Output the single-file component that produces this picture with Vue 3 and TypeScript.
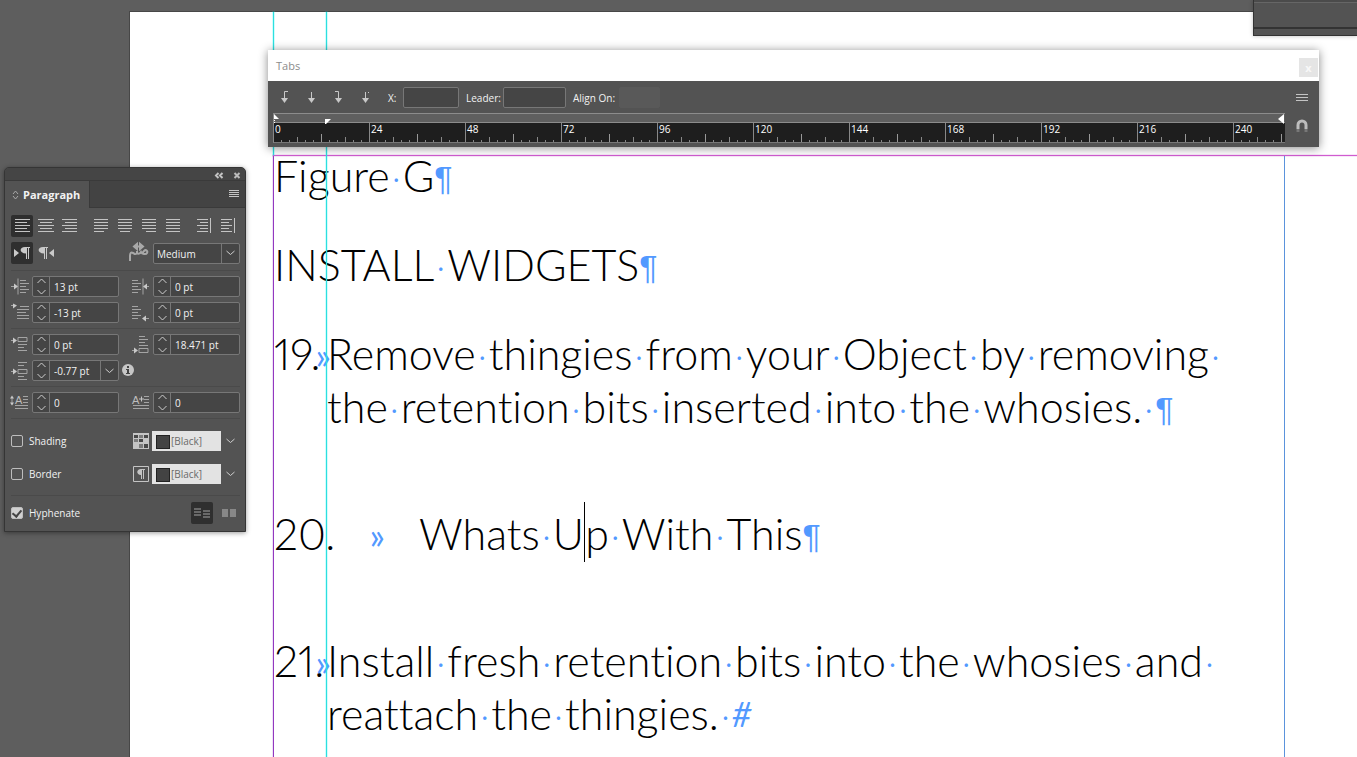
<script setup lang="ts">
import { ref } from 'vue'

interface Field { id: string; label: string; icon: string; value: string; menu?: boolean }
interface Line { words: string[]; end?: string }
interface Para { num?: string; wide?: boolean; lines: Line[] }

const aligns: { label: string; group: number; side?: boolean; rows: [number, number][] }[] = [
  { label: 'Align left', group: 0, rows: [[2, 17], [2, 14], [2, 17], [2, 14], [2, 17]] },
  { label: 'Align center', group: 0, rows: [[1, 17], [3, 15], [1, 17], [3, 15], [1, 17]] },
  { label: 'Align right', group: 0, rows: [[1, 16], [4, 16], [1, 16], [4, 16], [1, 16]] },
  { label: 'Justify last left', group: 1, rows: [[2, 16], [2, 16], [2, 16], [2, 16], [2, 12]] },
  { label: 'Justify last centered', group: 0, rows: [[2, 16], [2, 16], [2, 16], [2, 16], [4, 14]] },
  { label: 'Justify last right', group: 0, rows: [[2, 16], [2, 16], [2, 16], [2, 16], [6, 16]] },
  { label: 'Justify all', group: 0, rows: [[2, 16], [2, 16], [2, 16], [2, 16], [2, 16]] },
  { label: 'Align towards spine', group: 1, side: true, rows: [[2, 13], [5, 13], [2, 13], [5, 13], [2, 13]] },
  { label: 'Align away from spine', group: 0, side: true, rows: [[2, 13], [2, 10], [2, 13], [2, 10], [2, 13]] },
]

const indentIcons: Record<string, string> = {
  left: 'M0 9h5M7 1v16M9 3h6M9 6h9M9 9h6M9 12h9M9 15h6',
  right: 'M0 3h6M0 6h9M0 9h6M0 12h9M0 15h6M11 1v16M13 9h4',
  first: 'M0 2h4M9 3h9M6 6h12M6 9h9M6 12h12M6 15h12',
  last: 'M0 3h6M0 6h9M0 9h6M0 12h9M0 15h6M12 15h5',
  before: 'M0 5h4M7 2h9v4h-9zM7 9h9M7 12h6M7 15h9',
  after: 'M7 1h6M7 4h9M7 7h6M7 10h9M7 13h9v4h-9zM0 15h4',
  between: 'M7 1h9M7 4h6M7 8h9v4h-9zM7 15h6M7 18h9M0 10h4',
  dropLines: 'M1 4v7M12 3h5M12 6h5M12 9h5M4 12h13M4 15h13',
  dropChars: 'M12 3h5M12 6h5M12 9h5M1 12h16M1 15h16',
}
const arrowHeads: Record<string, string> = {
  left: 'M3 6l4 3-4 3z',
  right: 'M15 6l-4 3 4 3z',
  first: 'M2 0l4 2-4 3z',
  last: 'M14 12l-4 3 4 3z',
  before: 'M2 2l4 3-4 3z',
  after: 'M2 12l4 3-4 3z',
  between: 'M2 7l4 3-4 3z',
  dropLines: 'M-1 5l2-3 2 3zM-1 9l2 3 2-3z',
  dropChars: '',
}

const groups = ref<Field[][]>([
  [
    { id: 'li', label: 'Left indent', icon: 'left', value: '13 pt' },
    { id: 'ri', label: 'Right indent', icon: 'right', value: '0 pt' },
    { id: 'fi', label: 'First line left indent', icon: 'first', value: '-13 pt' },
    { id: 'la', label: 'Last line right indent', icon: 'last', value: '0 pt' },
  ],
  [
    { id: 'sb', label: 'Space before', icon: 'before', value: '0 pt' },
    { id: 'sa', label: 'Space after', icon: 'after', value: '18.471 pt' },
    { id: 'sp', label: 'Space between paragraphs', icon: 'between', value: '-0.77 pt', menu: true },
  ],
  [
    { id: 'dl', label: 'Drop cap lines', icon: 'dropLines', value: '0' },
    { id: 'dc', label: 'Drop cap characters', icon: 'dropChars', value: '0' },
  ],
])

const shading = ref(false)
const border = ref(false)
const hyphenate = ref(true)
const tabX = ref('')
const leader = ref('')
const marks = Array.from({ length: 11 }, (_, i) => i * 24)
const tabIcons = [
  { label: 'Left-justified tab', d: 'M6.500 11V2.500H10' },
  { label: 'Center-justified tab', d: 'M6.500 11V3' },
  { label: 'Right-justified tab', d: 'M3 2.500h3.500V11' },
  { label: 'Align to decimal tab', d: 'M6.500 11V3M9 3.500h1' },
]

const paras: Para[] = [
  { lines: [{ words: ['Figure', 'G'], end: '¶' }] },
  { lines: [{ words: ['INSTALL', 'WIDGETS'], end: '¶' }] },
  {
    num: '19.',
    lines: [
      { words: ['Remove', 'thingies', 'from', 'your', 'Object', 'by', 'removing', ''] },
      { words: ['the', 'retention', 'bits', 'inserted', 'into', 'the', 'whosies.', ''], end: '¶' },
    ],
  },
  { num: '20.', wide: true, lines: [{ words: ['Whats', 'U|p', 'With', 'This'], end: '¶' }] },
  {
    num: '21.',
    lines: [
      { words: ['Install', 'fresh', 'retention', 'bits', 'into', 'the', 'whosies', 'and', ''] },
      { words: ['reattach', 'the', 'thingies.', ''], end: '#' },
    ],
  },
]
</script>

<template>
  <main class="desk">
    <section class="page" aria-label="Document page">
      <i class="guide first"></i>
      <i class="guide second"></i>
      <i class="frame-top"></i>
      <div class="frame">
        <div v-for="(p, i) in paras" :key="i" class="para" :class="{ list: p.num, wide: p.wide }">
          <span v-if="p.num" class="num">{{ p.num }}<span class="tabmark">»</span></span>
          <div class="lines">
            <p v-for="(l, j) in p.lines" :key="j" class="line">
              <template v-for="(w, k) in l.words" :key="k">
                <span v-if="k" class="space">·</span>
                <template v-if="w.includes('|')">{{ w.split('|')[0] }}<i class="caret"></i>{{ w.split('|')[1] }}</template>
                <template v-else>{{ w }}</template>
              </template>
              <span v-if="l.end" class="end" :class="{ hash: l.end === '#' }">{{ l.end }}</span>
            </p>
          </div>
        </div>
      </div>
    </section>

    <div class="dock"></div>

    <section class="tabs" aria-label="Tabs">
      <header class="tabs-title">
        <span>Tabs</span>
        <button class="close" aria-label="Close">x</button>
      </header>
      <div class="tabs-body">
        <div class="tabs-main">
          <div class="tabs-tools">
            <button v-for="t in tabIcons" :key="t.label" class="tabbtn" :aria-label="t.label">
              <svg width="14" height="16" viewBox="0 0 14 16"><path :d="t.d" /><path class="fill" d="M3 9h7l-3.500 5z" /></svg>
            </button>
            <label for="tx" class="lx">X:</label><input id="tx" v-model="tabX" class="box bx" />
            <label for="tl" class="ll">Leader:</label><input id="tl" v-model="leader" class="box bl" />
            <label for="ta" class="la">Align On:</label><input id="ta" class="box off" disabled />
          </div>
          <div class="ruler">
            <div class="strip">
              <svg class="mk start" width="6" height="10" viewBox="0 0 6 10"><path d="M0 0l5 5H0z" /><path d="M0 6h1v1H0zM0 8h1v1H0z" /></svg>
              <svg class="mk indent" width="6" height="5" viewBox="0 0 6 5"><path d="M0 0h6L1 5H0z" /></svg>
              <svg class="mk stop" width="6" height="10" viewBox="0 0 6 10"><path d="M6 0v10L0 5z" /></svg>
            </div>
            <div class="scale"><span v-for="m in marks" :key="m">{{ m }}</span></div>
          </div>
        </div>
        <div class="tabs-side">
          <button aria-label="Panel menu"><svg width="14" height="10" viewBox="0 0 14 10"><path class="ln" d="M1 1.500h12M1 4.500h12M1 7.500h12" /></svg></button>
          <button aria-label="Position panel above text frame">
            <svg width="14" height="14" viewBox="0 0 14 14"><path class="mag" d="M3 10V6a4 4 0 0 1 8 0v4" /><path class="tip" d="M3 10v3M11 10v3" /></svg>
          </button>
        </div>
      </div>
    </section>

    <section class="panel" aria-label="Paragraph">
      <div class="grip">
        <button aria-label="Collapse"><svg width="8" height="7" viewBox="0 0 8 7"><path class="thick" d="M3.500 1L1 3.500 3.500 6M7.500 1L5 3.500 7.500 6" /></svg></button>
        <button aria-label="Close panel"><svg width="8" height="7" viewBox="0 0 8 7"><path class="cross" d="M1.500 1l5 5M6.500 1l-5 5" /></svg></button>
      </div>
      <div class="tabrow">
        <h2><svg width="7" height="10" viewBox="0 0 7 10"><path class="thin" d="M1 4l2.500-3L6 4M1 6l2.500 3L6 6" /></svg>Paragraph</h2>
        <button class="menu" aria-label="Paragraph menu"><svg width="10" height="8" viewBox="0 0 10 8"><path class="ln" d="M0 .5h10M0 2.500h10M0 4.500h10M0 6.500h10" /></svg></button>
      </div>
      <div class="body">
        <div class="row aligns">
          <button v-for="(a, i) in aligns" :key="a.label" class="ib" :class="{ on: i === 0, gap: a.group }" :aria-label="a.label">
            <svg width="18" height="18" viewBox="0 0 18 18">
              <path v-for="(r, k) in a.rows" :key="k" class="ln" :d="`M${r[0]} ${k * 3 + 2}.5H${r[1]}`" />
              <path v-if="a.side" class="ln" d="M15.500 1v15" />
            </svg>
          </button>
        </div>
        <div class="row dir">
          <button class="ib on" aria-label="Left to right"><svg width="18" height="18" viewBox="0 0 18 18"><path class="fl" d="M1 5l5 4-5 4zM12 3h5v1h-1v11h-1V4h-1v11h-1V9.500C6 9.500 6 3 12 3z" /></svg></button>
          <button class="ib" aria-label="Right to left"><svg width="18" height="18" viewBox="0 0 18 18"><path class="fl" d="M17 5l-5 4 5 4zM6 3h5v1h-1v11H9V4H8v11H7V9.500C0 9.500 0 3 6 3z" /></svg></button>
          <svg class="kash" width="19" height="18" viewBox="0 0 19 18"><path d="M1 17v-5c0-3 1-4 3-3s2 2 4 0V7M8 9c1 1 3 1 4-1 1 2 5 3 6 1s-1-4-3-2-1 2 0 2" /><path d="M7 2.500h5" /><path class="fl" d="M8 0v5L5 2.500zM11 0v5l3-2.500z" /></svg>
          <div class="pick"><select aria-label="Kashida width"><option>Medium</option></select><svg width="9" height="6" viewBox="0 0 9 6"><path d="M.5 1l4 3.500 4-3.500" /></svg></div>
        </div>
        <div v-for="(g, gi) in groups" :key="gi" class="fields">
          <div v-for="f in g" :key="f.id" class="field">
            <label :for="f.id" :aria-label="f.label">
              <svg width="18" height="19" viewBox="0 -0.500 18 19">
                <path class="ln two" :d="indentIcons[f.icon]" /><path class="fl" :d="arrowHeads[f.icon]" />
                <text v-if="f.icon.startsWith('drop')" :x="f.icon === 'dropLines' ? 4 : 0" y="10">A</text>
                <path v-if="f.icon === 'dropChars'" class="ln" d="M9.500 3v5M7 5.500h5" />
              </svg>
            </label>
            <div class="num-box">
              <button class="step" :aria-label="'Step ' + f.label"><svg width="9" height="17" viewBox="0 0 9 17"><path d="M.5 5l4-4 4 4M.5 12l4 4 4-4" /></svg></button>
              <input :id="f.id" v-model="f.value" />
              <button v-if="f.menu" class="drop" aria-label="Choose value"><svg width="9" height="6" viewBox="0 0 9 6"><path d="M.5 1l4 3.500 4-3.500" /></svg></button>
            </div>
            <svg v-if="f.menu" class="info" width="12" height="12" viewBox="0 0 12 12"><circle cx="6" cy="6" r="6" /><path d="M5 2h2v2H5zM4 5h3v4h1v1H4V9h1V6H4z" /></svg>
          </div>
        </div>
        <div class="checks">
          <div class="check">
            <input id="shade" v-model="shading" type="checkbox" /><label for="shade">Shading</label>
            <svg class="sw" width="16" height="16" viewBox="0 0 16 16"><path class="light" d="M0 0h16v16H0z" /><path class="dark" d="M1 2h4v3H1zM11 2h4v3h-4zM6 6h4v3H6zM11 11h4v4h-4z" /><path class="mid" d="M6 2h4v3H6zM1 6h4v3H1zM6 11h4v4H6z" /></svg>
            <div class="color"><select aria-label="Shading color"><option>[Black]</option></select></div>
            <svg class="cv" width="9" height="6" viewBox="0 0 9 6"><path d="M.5 1l4 3.500 4-3.500" /></svg>
          </div>
          <div class="check">
            <input id="bord" v-model="border" type="checkbox" /><label for="bord">Border</label>
            <svg class="sw" width="16" height="16" viewBox="0 0 16 16"><path class="edge" d="M.5 .5h15v15H.5z" /><path class="light" d="M8 3h4v1h-1v9h-1V4H9v9H8V9C3 9 3 3 8 3z" /></svg>
            <div class="color"><select aria-label="Border color"><option>[Black]</option></select></div>
            <svg class="cv" width="9" height="6" viewBox="0 0 9 6"><path d="M.5 1l4 3.500 4-3.500" /></svg>
          </div>
        </div>
        <div class="hyph">
          <input id="hy" v-model="hyphenate" type="checkbox" /><label for="hy">Hyphenate</label>
          <button class="ib on" aria-label="Balance columns"><svg width="18" height="18" viewBox="0 0 18 18"><path class="ln two" d="M1 5h7M1 8h7M1 11h7M10 7h7M10 10h7M10 13h7" /></svg></button>
          <button class="ib dim" aria-label="Split columns"><svg width="18" height="18" viewBox="0 0 18 18"><path class="fl" d="M2 5h6v8H2zM10 5h6v8h-6z" /></svg></button>
        </div>
      </div>
    </section>
  </main>
</template>

<style>
html, body, #app { height: 100%; }
body { margin: 0; overflow: hidden; }
</style>

<style scoped>
* { box-sizing: border-box; }
.desk { position: relative; height: 100%; min-height: 100vh; overflow: hidden; background: #5e5e5e; padding: 11px 0 0 129px; display: flex; font-family: "Open Sans", "Noto Sans", sans-serif; font-size: 10px; color: #f2f2f2; }
button { border: 0; padding: 0; margin: 0; background: none; color: inherit; font: inherit; display: flex; align-items: center; justify-content: center; }
input, select { font: inherit; color: inherit; margin: 0; }
svg { display: block; flex: none; overflow: visible; }
svg path { fill: none; stroke: #cfcfcf; }

.page { position: relative; flex: 1; background: #fff; border: solid #474747; border-width: 1px 0 0 1px; padding: 143px 72px 0 143px; }
.guide { position: absolute; top: 0; width: 1px; background: #2cdfdf; box-shadow: 0 0 0 1px rgba(0, 240, 240, 0.18); z-index: 2; }
.guide.first { left: 143px; height: 143px; }
.guide.second { left: 196px; bottom: 0; }
.frame-top { position: absolute; left: 143px; right: 0; top: 143px; height: 1px; background: #d05cd0; box-shadow: 0 0 0 1px rgba(207, 95, 207, 0.15); z-index: 1; }
.frame { display: flow-root; height: 100%; border-left: 1px solid #9238c0; border-right: 1px solid #5b93dc; box-shadow: -1px 0 rgba(146, 56, 192, 0.15); color: #000; font: 300 43px/53px Lato, sans-serif; font-variant-ligatures: none; font-variant-numeric: proportional-nums; }
.para { margin-bottom: 36px; white-space: nowrap; }
.para:first-child { margin-top: -6px; }
.para.list { display: flex; margin-bottom: 74px; }
.num { position: relative; width: 53px; flex: none; }
.wide .num { width: 145px; }
.tabmark { position: absolute; right: -4px; top: 2px; font-size: 36px; font-weight: 400; color: #5299ff; }
.wide .tabmark { right: 34px; }
.line { margin: 0; display: flex; }
.space { width: 13px; color: #5299ff; font: 700 18px/60px Lato, sans-serif; height: 53px; display: flex; justify-content: center; }
.end { color: #5299ff; font: 400 34px/58px "Liberation Sans", sans-serif; height: 53px; }
.end.hash { font: italic 400 34px/53px Lato, sans-serif; }
.caret { width: 1px; height: 60px; background: #000; margin-top: -5px; margin-bottom: -6px; }

.dock { position: absolute; right: 0; top: 0; width: 104px; height: 36px; background: linear-gradient(#4b4b4b 2px, #666 2px 3px, #535353 3px 27px, #333 27px 29px, #535353 29px); border: solid #333; border-width: 0 0 1px 1px; box-shadow: 0 0 4px #0004; }

.tabs { position: absolute; left: 268px; right: 38px; top: 50px; box-shadow: 0 1px 9px #0007; z-index: 3; background: #535353; }
.tabs-title { height: 31px; background: #fff; color: #8b8b8b; font-size: 11px; display: flex; align-items: center; justify-content: space-between; padding: 0 1px 0 8px; }
.close { width: 19px; height: 19px; margin-top: 4px; background: #e5e5e5; color: #f8f8f8; font-weight: 700; }
.tabs-body { display: flex; }
.tabs-main { flex: 1; min-width: 0; padding-left: 5px; }
.tabs-tools { height: 32px; display: flex; align-items: center; }
.tabbtn { width: 27px; height: 24px; padding-right: 4px; }
.tabbtn svg path { stroke: #c8c8c8; }
.tabbtn svg .fill { fill: #c8c8c8; stroke: none; }
.box { height: 21px; background: #454545; border: 1px solid #777; border-radius: 2px; padding: 0 4px; }
.lx { margin-left: 7px; width: 15px; }
.bx { width: 56px; }
.ll { margin-left: 7px; width: 37px; }
.bl { width: 63px; }
.la { margin-left: 7px; width: 46px; }
.off { width: 41px; background: #595959; border-color: #595959; }
.tabs-tools label { padding-top: 2px; white-space: nowrap; }
.ruler { border-top: 1px solid #8c8c8c; border-bottom: 1px solid #777; border-left: 1px solid #888; margin-bottom: 4px; }
.strip { position: relative; height: 9px; background: #5f5f5f; border-bottom: 1px solid #8c8c8c; }
.mk { position: absolute; top: 0; left: 0; }
.mk path { fill: #fff; stroke: none; }
.mk.indent { left: 51px; top: 5px; }
.mk.stop { left: auto; right: 1px; }
.scale { display: flex; height: 19px; overflow: hidden; color: #fff; line-height: 12px;
  background:
    repeating-linear-gradient(90deg, #999 0 1px, #0000 1px 48px) -1px 100% / 100% 8px no-repeat,
    repeating-linear-gradient(90deg, #888 0 1px, #0000 1px 24px) -1px 100% / 100% 5px no-repeat,
    repeating-linear-gradient(90deg, #888 0 1px, #0000 1px 8px) -1px 100% / 100% 2px no-repeat, #1e1e1e; }
.scale span { width: 96px; flex: none; padding-left: 1px; border-right: 1px solid #888; }
.tabs-side { width: 34px; display: flex; flex-direction: column; align-items: center; padding-top: 12px; gap: 16px; }
svg .ln { stroke: #c4c4c4; }
svg .mag { stroke: #bdbdbd; stroke-width: 3; }
svg .tip { stroke: #777; stroke-width: 3; }

.panel { position: absolute; left: 4px; top: 167px; width: 242px; background: #535353; border: 1px solid #353535; border-radius: 5px 5px 0 0; box-shadow: 0 1px 5px #0006; z-index: 4; }
.grip { height: 13px; background: #454545; border-bottom: 1px solid #3a3a3a; border-radius: 4px 4px 0 0; display: flex; justify-content: flex-end; gap: 10px; padding: 2px 4px 0 0; }
.grip .thick { stroke: #c4c4c4; stroke-width: 2; }
.grip .cross { stroke: #bbb; stroke-width: 2; }
.tabrow { height: 27px; background: #434343; border-bottom: 1px solid #3a3a3a; display: flex; justify-content: space-between; padding-right: 6px; }
h2 { margin: 0 0 -1px; width: 85px; background: #535353; border-right: 1px solid #3a3a3a; font-size: 11px; font-weight: 700; display: flex; align-items: center; gap: 4px; padding-left: 7px; }
.thin { stroke: #a8a8a8; }
.body { padding: 7px 5px 7px 6px; }
.row { display: flex; }
.ib { width: 22px; height: 22px; border-radius: 2px; margin-right: 2px; flex: none; }
.ib.on { background: #2f2f2f; }
.ib.gap { margin-left: 7px; }
.row.dir { margin-top: 5px; align-items: center; padding-bottom: 1px; }
svg .fl { fill: #c9c9c9; stroke: none; }
.kash { margin-left: 70px; }
.kash path { stroke: #a8a8a8; stroke-width: 2; }
.kash .fl { fill: #a8a8a8; }
.pick { margin-left: 5px; position: relative; width: 87px; height: 21px; border: 1px solid #777; border-radius: 2px; background: #454545; display: flex; align-items: center; justify-content: flex-end; padding-right: 4px; }
.pick::before { content: ""; width: 1px; height: 19px; background: #777; margin-right: 4px; }
.pick select { position: absolute; inset: 0; width: 100%; appearance: none; background: none; border: 0; padding: 1px 3px 0; }
.fields { display: grid; grid-template-columns: 108px 108px; column-gap: 13px; row-gap: 5px; border-top: 1px solid #4a4a4a; padding: 5px 0 5px; }
.dir + .fields { margin-top: 5px; }
.field { position: relative; display: flex; align-items: center; }
.field label { width: 21px; }
.field text { font: 11px "Liberation Sans", sans-serif; fill: #bdbdbd; }
.field svg .two, .hyph svg .two { stroke: #a4a4a4; }
.num-box { width: 87px; height: 21px; display: flex; border: 1px solid #777; border-radius: 2px; background: #454545; }
.num-box input { flex: 1; min-width: 0; border: 0; background: none; padding: 0 0 0 4px; }
.step { width: 17px; border-right: 1px solid #777; }
.drop { width: 18px; border-left: 1px solid #777; }
.info { position: absolute; left: 111px; top: 4px; }
.info circle { fill: #c6c6c6; }
.info path { fill: #444; stroke: none; }
.checks { border-top: 1px solid #4a4a4a; border-bottom: 1px solid #4a4a4a; padding: 12px 0 11px; display: grid; gap: 13px; }
.check, .hyph { display: flex; align-items: center; }
.check label { width: 106px; padding-left: 6px; }
input[type="checkbox"] { appearance: none; width: 12px; height: 12px; border: 1px solid #bdbdbd; border-radius: 2px; }
input[type="checkbox"]:checked { background: #d0d0d0; display: grid; place-items: center; }
input[type="checkbox"]:checked::before { content: ""; width: 4px; height: 7px; border: solid #444; border-width: 0 2px 2px 0; transform: rotate(40deg); margin-top: -2px; }
.sw { margin-left: 4px; }
.sw path { stroke: none; }
.sw .light { fill: #c4c4c4; }
.sw .dark { fill: #484848; }
.sw .mid { fill: #7c7c7c; }
.sw .edge { stroke: #c4c4c4; }
.color { position: relative; margin-left: 3px; width: 69px; height: 20px; background: #e3e3e3; }
.color::before { content: ""; position: absolute; left: 4px; top: 4px; width: 12px; height: 12px; background: #434343; border: 1px solid #222; }
.color select { width: 100%; height: 100%; appearance: none; border: 0; background: none; color: #6a6a6a; padding: 0 0 0 19px; }
.cv { margin-left: 5px; }
.hyph { padding-top: 6px; }
.hyph label { padding-left: 6px; margin-right: auto; }
.hyph .ib { margin-right: 5px; }
.hyph .ib.dim { margin-right: 0; }
.dim svg .fl { fill: #888; }
</style>
